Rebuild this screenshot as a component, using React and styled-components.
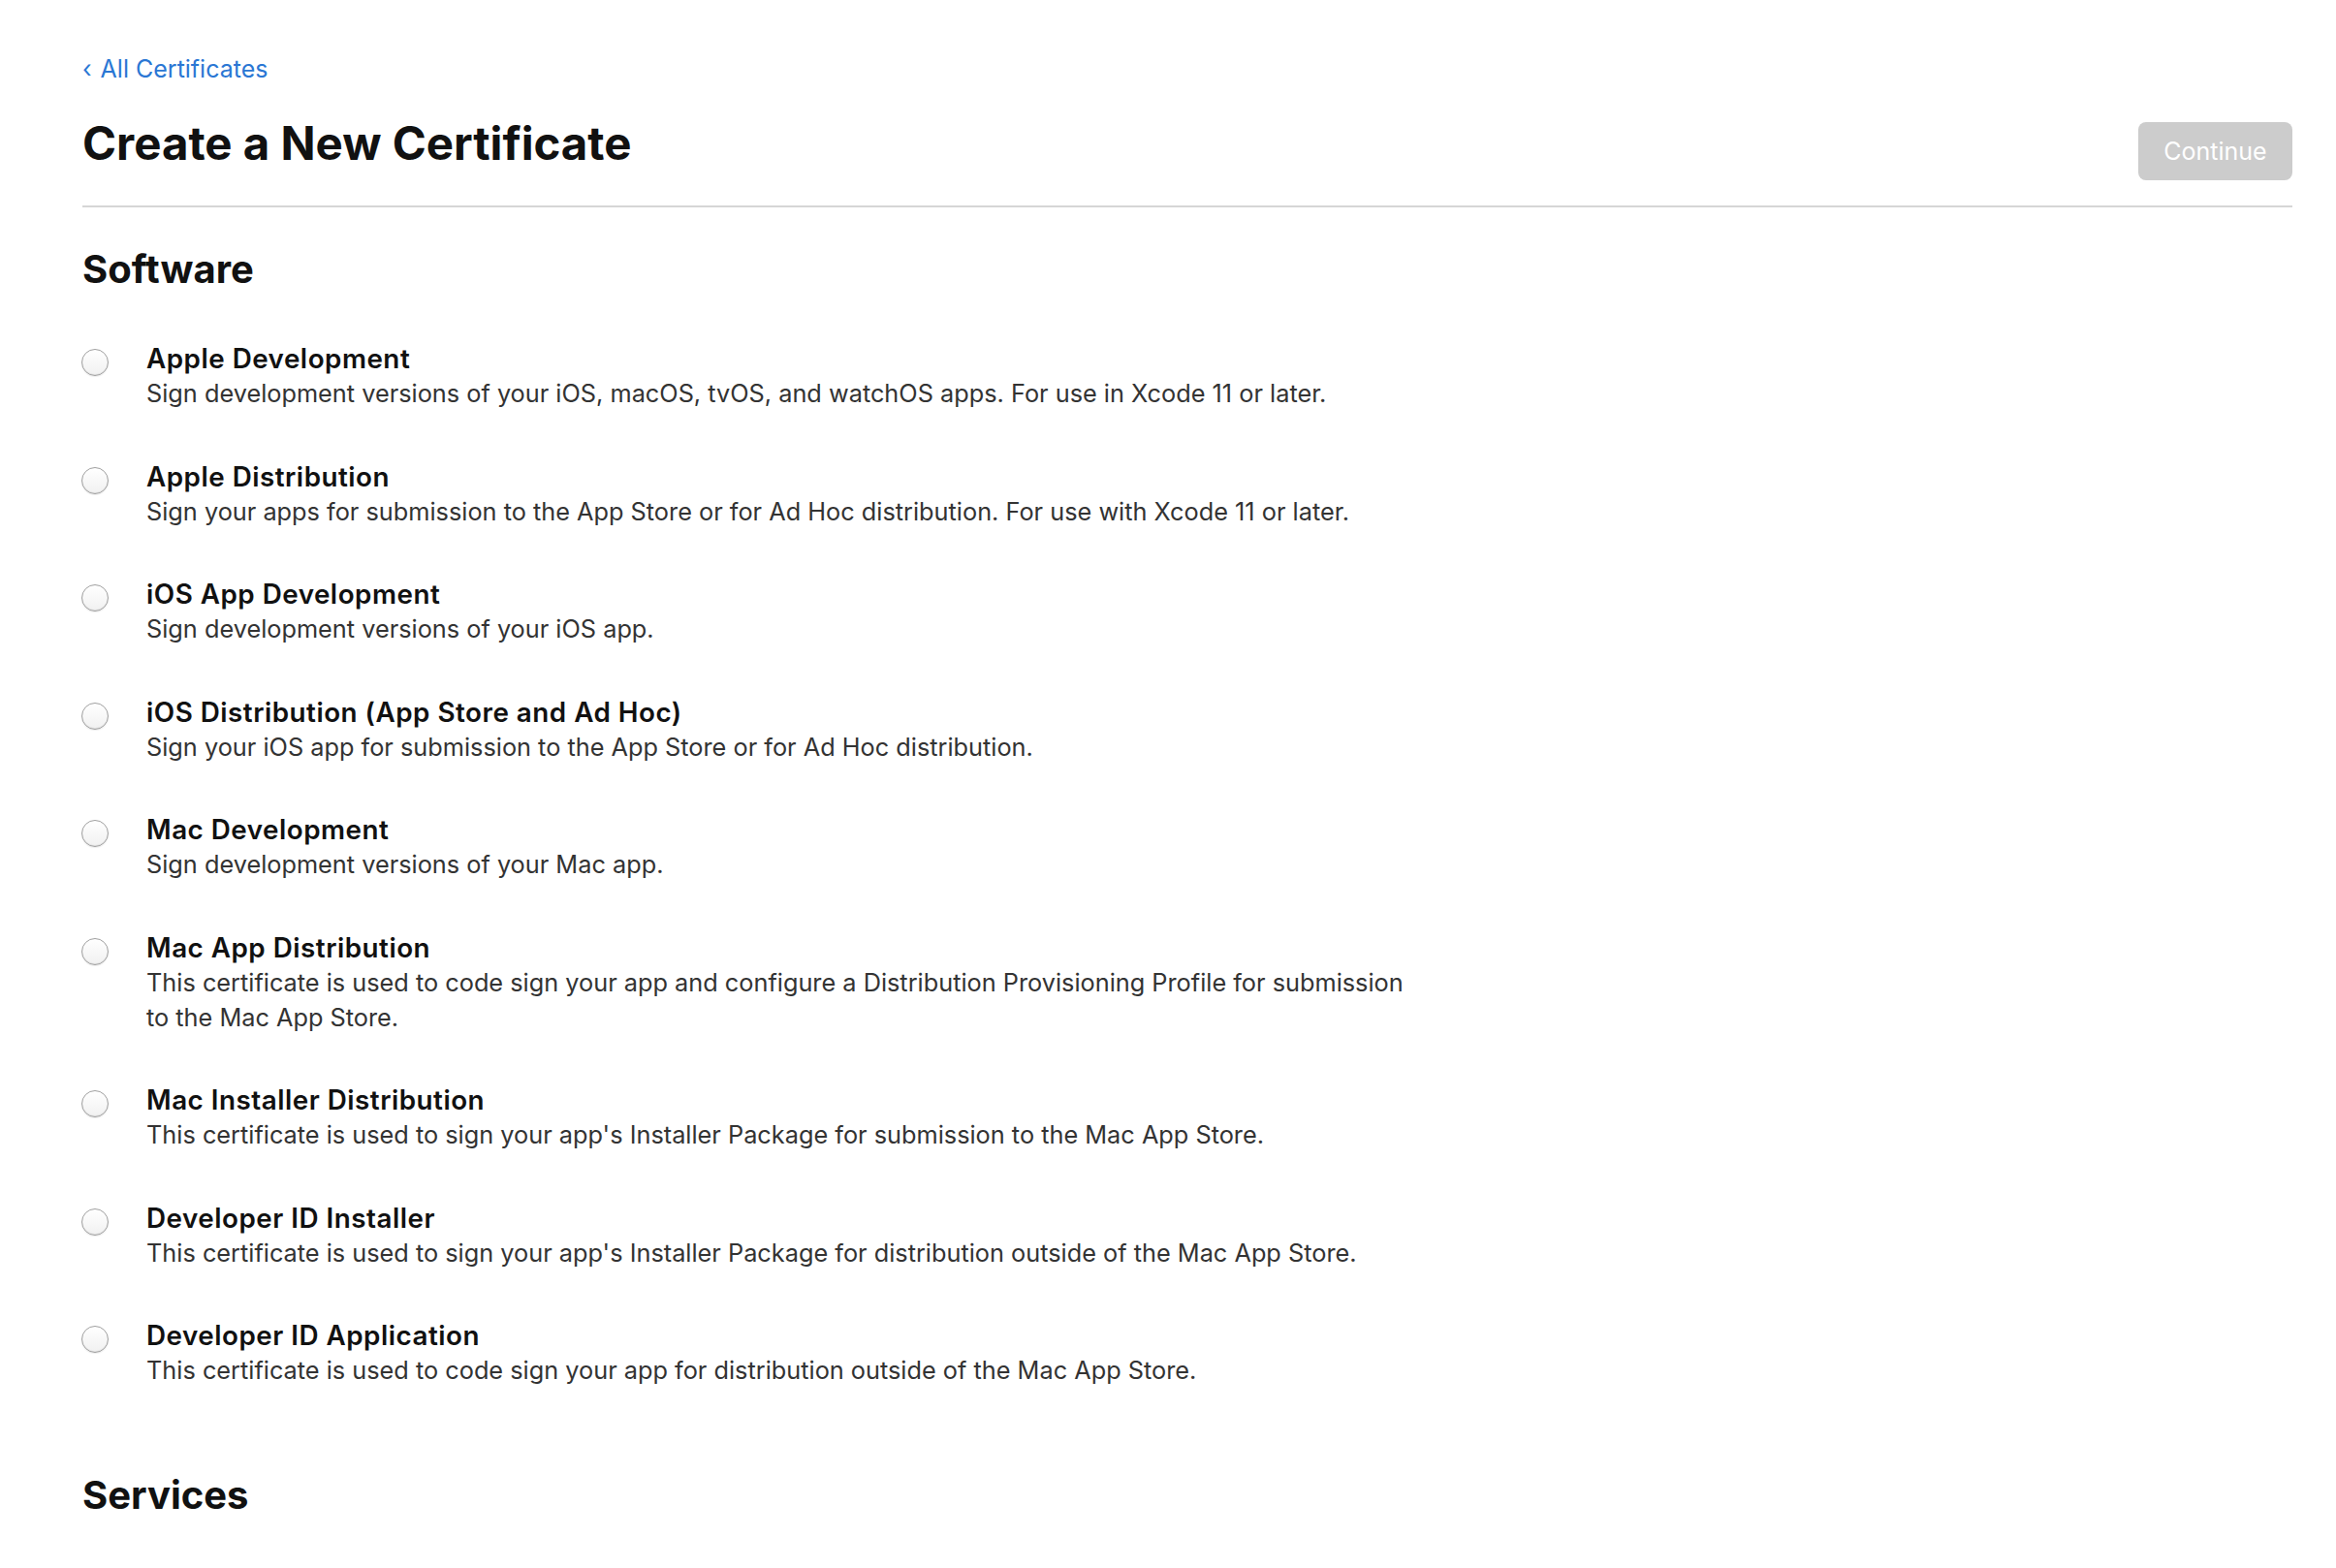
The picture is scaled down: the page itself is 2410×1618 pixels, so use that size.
import React from 'react';
import styled, { createGlobalStyle } from 'styled-components';

const GlobalStyle = createGlobalStyle`
  body {
    margin: 0;
    background: #ffffff;
    font-family: 'Inter', 'Liberation Sans', sans-serif;
    color: #1d1d1f;
  }
`;

const Page = styled.div`
  padding: 53px 45px 0 85px;
`;

const BackLink = styled.a`
  display: block;
  font-size: 25px;
  line-height: 36px;
  color: #2a77d4;
  text-decoration: none;
  cursor: pointer;
`;

const Chevron = styled.span`
  display: inline-block;
  margin-right: 9px;
  font-size: 25px;
`;

const Header = styled.div`
  display: flex;
  justify-content: space-between;
  align-items: flex-start;
  margin-top: 30px;
  padding-bottom: 26px;
  border-bottom: 2px solid #d6d6d6;
`;

const Title = styled.h1`
  margin: 0;
  font-size: 47.4px;
  line-height: 58px;
  font-weight: 700;
  color: #111111;
`;

const ContinueButton = styled.button`
  margin-top: 7px;
  width: 159px;
  height: 60px;
  border: none;
  border-radius: 8px;
  background: #cccccc;
  color: #ffffff;
  font-family: inherit;
  font-size: 25px;
  cursor: default;
`;

const Section = styled.section`
  margin-top: ${p => p.$first ? '41px' : '88px'};
`;

const SectionTitle = styled.h2`
  margin: 0;
  font-size: 40px;
  line-height: 46px;
  font-weight: 700;
  color: #111111;
`;

const OptionList = styled.div`
  display: flex;
  flex-direction: column;
  gap: 49.5px;
  margin-top: 51px;
`;

const Option = styled.label`
  display: flex;
  align-items: flex-start;
  gap: 39px;
  margin-left: -1px;
  cursor: pointer;
`;

const Radio = styled.input.attrs({ type: 'radio' })`
  appearance: none;
  flex: none;
  width: 28px;
  height: 28px;
  margin: 8px 0 0;
  border-radius: 50%;
  border: 1px solid #9f9f9f;
  background: linear-gradient(#ffffff, #f1f1f1);
  box-shadow: inset 0 -1px 1px rgba(0, 0, 0, 0.07), 0 1px 1px rgba(0, 0, 0, 0.07);
`;

const OptionText = styled.div`
  max-width: 1310px;
`;

const OptionTitle = styled.div`
  font-size: 27.8px;
  line-height: 36px;
  font-weight: 600;
  letter-spacing: 0.5px;
  color: #111111;
`;

const OptionDesc = styled.div`
  font-size: 25.3px;
  line-height: 36px;
  color: #333333;
`;

const software = [
  ['Apple Development', 'Sign development versions of your iOS, macOS, tvOS, and watchOS apps. For use in Xcode 11 or later.'],
  ['Apple Distribution', 'Sign your apps for submission to the App Store or for Ad Hoc distribution. For use with Xcode 11 or later.'],
  ['iOS App Development', 'Sign development versions of your iOS app.'],
  ['iOS Distribution (App Store and Ad Hoc)', 'Sign your iOS app for submission to the App Store or for Ad Hoc distribution.'],
  ['Mac Development', 'Sign development versions of your Mac app.'],
  ['Mac App Distribution', 'This certificate is used to code sign your app and configure a Distribution Provisioning Profile for submission to the Mac App Store.'],
  ['Mac Installer Distribution', "This certificate is used to sign your app's Installer Package for submission to the Mac App Store."],
  ['Developer ID Installer', "This certificate is used to sign your app's Installer Package for distribution outside of the Mac App Store."],
  ['Developer ID Application', 'This certificate is used to code sign your app for distribution outside of the Mac App Store.'],
];

export default function App() {
  return (
    <Page>
      <GlobalStyle />
      <BackLink><Chevron>‹</Chevron>All Certificates</BackLink>
      <Header>
        <Title>Create a New Certificate</Title>
        <ContinueButton disabled>Continue</ContinueButton>
      </Header>
      <Section $first>
        <SectionTitle>Software</SectionTitle>
        <OptionList>
          {software.map(([title, desc]) => (
            <Option key={title}>
              <Radio name="cert" />
              <OptionText>
                <OptionTitle>{title}</OptionTitle>
                <OptionDesc>{desc}</OptionDesc>
              </OptionText>
            </Option>
          ))}
        </OptionList>
      </Section>
      <Section>
        <SectionTitle>Services</SectionTitle>
      </Section>
    </Page>
  );
}
